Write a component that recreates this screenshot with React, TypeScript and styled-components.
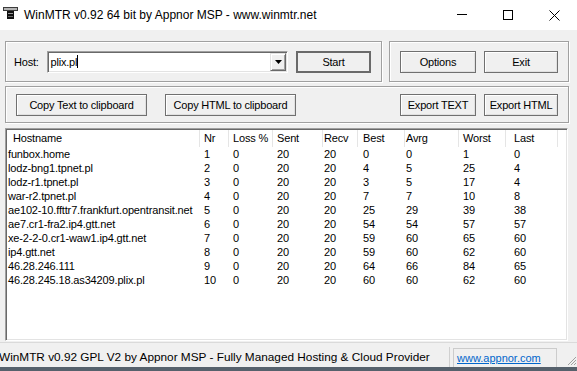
import React, { FC } from 'react';
import styled, { createGlobalStyle } from 'styled-components';

const GlobalStyle = createGlobalStyle`
  html, body {
    margin: 0;
    padding: 0;
    background: #f0f0f0;
  }
  body {
    font-family: "Liberation Sans", Arial, sans-serif;
  }
`;

const Window = styled.div`
  width: 577px;
  height: 371px;
  display: flex;
  flex-direction: column;
  background: #f0f0f0;
  overflow: hidden;
  font-family: "Liberation Sans", Arial, sans-serif;
  color: #000;
`;

const TitleBar = styled.div`
  flex: none;
  height: 30px;
  background: #fff;
  display: flex;
  align-items: center;
`;

const AppIcon = styled.svg`
  align-self: flex-start;
  margin: 7px 0 0 3px;
`;

const TitleText = styled.span`
  flex: 1;
  margin-left: 6px;
  font-size: 12px;
  white-space: nowrap;
`;

const CaptionButton = styled.div`
  width: 46px;
  height: 30px;
  display: flex;
  align-items: center;
  justify-content: center;
`;

const Client = styled.div`
  flex: none;
  display: flex;
  flex-direction: column;
  padding: 11px 0 0 5px;
`;

const TopRow = styled.div`
  display: flex;
  gap: 7px;
`;

const GroupBox = styled.div<{ $width: number; $height: number; $padLeft: number }>`
  box-sizing: border-box;
  width: ${p => p.$width}px;
  height: ${p => p.$height}px;
  border: 1px solid #a0a0a0;
  box-shadow: inset 1px 1px 0 #fff, 1px 1px 0 #fff;
  display: flex;
  align-items: center;
  padding: 0 10px 0 ${p => p.$padLeft}px;
`;

const SecondGroup = styled(GroupBox)`
  margin-top: 4px;
`;

const HostLabel = styled.span`
  width: 33px;
  font-size: 11px;
  letter-spacing: -0.2px;
`;

const Combo = styled.div`
  box-sizing: border-box;
  width: 245px;
  height: 22px;
  background: #fff;
  border-style: solid;
  border-width: 1px;
  border-color: #a0a0a0 #fff #fff #a0a0a0;
  box-shadow: inset 1px 1px 0 #696969, inset -1px -1px 0 #e3e3e3;
  display: flex;
  align-items: center;
  padding: 0 1px 0 3px;
`;

const ComboText = styled.span`
  font-size: 11px;
  letter-spacing: -0.2px;
`;

const Caret = styled.span`
  width: 1px;
  height: 13px;
  background: #000;
`;

const DropButton = styled.div`
  box-sizing: border-box;
  margin-left: auto;
  width: 16px;
  height: 18px;
  background: #f0f0f0;
  border-style: solid;
  border-width: 1px;
  border-color: #e3e3e3 #696969 #696969 #e3e3e3;
  box-shadow: inset 1px 1px 0 #fff, inset -1px -1px 0 #a0a0a0;
  display: flex;
  align-items: center;
  justify-content: center;
`;

const Button = styled.button<{ $width: number; $gap?: number; $primary?: boolean }>`
  box-sizing: border-box;
  flex: none;
  width: ${p => p.$width}px;
  height: 22px;
  margin: 0 0 0 ${p => p.$gap ?? 0}px;
  padding: 0;
  background: #f0f0f0;
  border: ${p => (p.$primary ? '2px solid #6a6a6a' : '1px solid #707070')};
  box-shadow: ${p => (p.$primary ? 'none' : 'inset 1px 1px 0 #fff, inset -1px -1px 0 #e0e0e0')};
  font-family: "Liberation Sans", Arial, sans-serif;
  font-size: 11px;
  letter-spacing: -0.2px;
  color: #000;
`;

const Spacer = styled.div`
  flex: 1;
`;

const ListView = styled.div`
  box-sizing: border-box;
  margin-top: 5px;
  width: 563px;
  height: 213px;
  background: #fff;
  border-style: solid;
  border-width: 1px;
  border-color: #a0a0a0 #fff #fff #a0a0a0;
  box-shadow: inset 1px 1px 0 #696969, inset -1px -1px 0 #e3e3e3;
  padding: 1px;
  overflow: hidden;
`;

const columns = '193px 29px 44px 50px 35px 47px 54px 47px 52px 1fr';

const HeaderRow = styled.div`
  display: grid;
  grid-template-columns: ${columns};
  height: 17px;
`;

const HeaderCell = styled.div<{ $pad: number }>`
  box-sizing: border-box;
  border-right: 1px solid #e5e5e5;
  padding-left: ${p => p.$pad}px;
  font-size: 11px;
  letter-spacing: -0.15px;
  line-height: 17px;
  white-space: nowrap;
  overflow: hidden;
`;

const Row = styled.div`
  display: grid;
  grid-template-columns: ${columns};
  height: 14px;
`;

const Cell = styled.div<{ $pad: number }>`
  padding-left: ${p => p.$pad}px;
  font-size: 11px;
  letter-spacing: -0.15px;
  line-height: 14px;
  white-space: nowrap;
  overflow: hidden;
`;

const StatusBar = styled.div`
  box-sizing: border-box;
  flex: none;
  margin-top: 1px;
  height: 25px;
  border-top: 1px solid #dadada;
  display: flex;
  align-items: flex-end;
`;

const StatusPanel = styled.div`
  flex: none;
  box-sizing: border-box;
  width: 451px;
  height: 20px;
  margin-left: -1px;
  border-right: 1px solid #d0d0d0;
  font-size: 11.8px;
  line-height: 20px;
  white-space: nowrap;
  overflow: hidden;
`;

const LinkPanel = styled.div`
  flex: none;
  box-sizing: border-box;
  width: 104px;
  height: 19px;
  margin-left: 3px;
  border: 1px solid #cccccc;
  border-bottom: none;
  padding-left: 3px;
  font-size: 11px;
  line-height: 19px;
`;

const Link = styled.a`
  color: #0066cc;
  text-decoration: underline;
`;

const Grip = styled.svg`
  margin-left: auto;
  margin-bottom: 1px;
`;

const BottomEdge = styled.div`
  flex: none;
  height: 4px;
  background: #56616c;
`;

interface Hop {
  host: string;
  nr: number;
  loss: number;
  sent: number;
  recv: number;
  best: number;
  avrg: number;
  worst: number;
  last: number;
}

const hops: Hop[] = [
  { host: 'funbox.home', nr: 1, loss: 0, sent: 20, recv: 20, best: 0, avrg: 0, worst: 1, last: 0 },
  { host: 'lodz-bng1.tpnet.pl', nr: 2, loss: 0, sent: 20, recv: 20, best: 4, avrg: 5, worst: 25, last: 4 },
  { host: 'lodz-r1.tpnet.pl', nr: 3, loss: 0, sent: 20, recv: 20, best: 3, avrg: 5, worst: 17, last: 4 },
  { host: 'war-r2.tpnet.pl', nr: 4, loss: 0, sent: 20, recv: 20, best: 7, avrg: 7, worst: 10, last: 8 },
  { host: 'ae102-10.ffttr7.frankfurt.opentransit.net', nr: 5, loss: 0, sent: 20, recv: 20, best: 25, avrg: 29, worst: 39, last: 38 },
  { host: 'ae7.cr1-fra2.ip4.gtt.net', nr: 6, loss: 0, sent: 20, recv: 20, best: 54, avrg: 54, worst: 57, last: 57 },
  { host: 'xe-2-2-0.cr1-waw1.ip4.gtt.net', nr: 7, loss: 0, sent: 20, recv: 20, best: 59, avrg: 60, worst: 65, last: 60 },
  { host: 'ip4.gtt.net', nr: 8, loss: 0, sent: 20, recv: 20, best: 59, avrg: 60, worst: 62, last: 60 },
  { host: '46.28.246.111', nr: 9, loss: 0, sent: 20, recv: 20, best: 64, avrg: 66, worst: 84, last: 65 },
  { host: '46.28.245.18.as34209.plix.pl', nr: 10, loss: 0, sent: 20, recv: 20, best: 60, avrg: 60, worst: 62, last: 60 },
];

const headers = ['Hostname', 'Nr', 'Loss %', 'Sent', 'Recv', 'Best', 'Avrg', 'Worst', 'Last'];
const headerPads = [6, 4, 4, 4, 1, 5, 1, 4, 8];
const cellPads = [1, 4, 4, 4, 1, 5, 1, 4, 8];

const App: FC = () => {
  return (
    <Window>
      <GlobalStyle />
      <TitleBar>
        <AppIcon width="15" height="12" viewBox="0 0 15 12">
          <rect x="0.5" y="0.5" width="14" height="3" fill="#b4b4b4" stroke="#3c3c3c" />
          <rect x="4" y="4" width="7" height="8" fill="#111" />
          <rect x="5" y="6" width="5" height="1" fill="#9a9a9a" />
          <rect x="5" y="9" width="5" height="1" fill="#6a6a6a" />
        </AppIcon>
        <TitleText>WinMTR v0.92 64 bit by Appnor MSP - www.winmtr.net</TitleText>
        <CaptionButton>
          <svg width="10" height="10" viewBox="0 0 10 10">
            <line x1="0" y1="4.5" x2="10" y2="4.5" stroke="#000" strokeWidth="1" />
          </svg>
        </CaptionButton>
        <CaptionButton>
          <svg width="10" height="10" viewBox="0 0 10 10">
            <rect x="0.5" y="0.5" width="9" height="9" fill="none" stroke="#000" strokeWidth="1" />
          </svg>
        </CaptionButton>
        <CaptionButton>
          <svg width="11" height="11" viewBox="0 0 11 11">
            <path d="M0.5 0.5 L10.5 10.5 M10.5 0.5 L0.5 10.5" stroke="#000" strokeWidth="1" />
          </svg>
        </CaptionButton>
      </TitleBar>

      <Client>
        <TopRow>
          <GroupBox $width={377} $height={41} $padLeft={8}>
            <HostLabel>Host:</HostLabel>
            <Combo>
              <ComboText>plix.pl</ComboText>
              <Caret />
              <DropButton>
                <svg width="7" height="4" viewBox="0 0 7 4">
                  <polygon points="0,0 7,0 3.5,4" fill="#000" />
                </svg>
              </DropButton>
            </Combo>
            <Button $width={75} $gap={8} $primary>Start</Button>
          </GroupBox>
          <GroupBox $width={180} $height={41} $padLeft={10}>
            <Button $width={76}>Options</Button>
            <Button $width={74} $gap={8}>Exit</Button>
          </GroupBox>
        </TopRow>

        <SecondGroup $width={564} $height={37} $padLeft={10}>
          <Button $width={131}>Copy Text to clipboard</Button>
          <Button $width={131} $gap={18}>Copy HTML to clipboard</Button>
          <Spacer />
          <Button $width={76}>Export TEXT</Button>
          <Button $width={74} $gap={8}>Export HTML</Button>
        </SecondGroup>

        <ListView>
          <HeaderRow>
            {headers.map((h, i) => (
              <HeaderCell key={h} $pad={headerPads[i]}>{h}</HeaderCell>
            ))}
            <div />
          </HeaderRow>
          {hops.map(hop => (
            <Row key={hop.nr}>
              {[hop.host, hop.nr, hop.loss, hop.sent, hop.recv, hop.best, hop.avrg, hop.worst, hop.last].map((v, i) => (
                <Cell key={i} $pad={cellPads[i]}>{v}</Cell>
              ))}
            </Row>
          ))}
        </ListView>
      </Client>

      <StatusBar>
        <StatusPanel>WinMTR v0.92 GPL V2 by Appnor MSP - Fully Managed Hosting &amp; Cloud Provider</StatusPanel>
        <LinkPanel>
          <Link>www.appnor.com</Link>
        </LinkPanel>
        <Grip width="10" height="10" viewBox="0 0 10 10">
          <path d="M9 1 L1 9 M9 4 L4 9 M9 7 L7 9" stroke="#a0a0a0" strokeWidth="1" />
        </Grip>
      </StatusBar>
      <BottomEdge />
    </Window>
  );
};

export default App;
